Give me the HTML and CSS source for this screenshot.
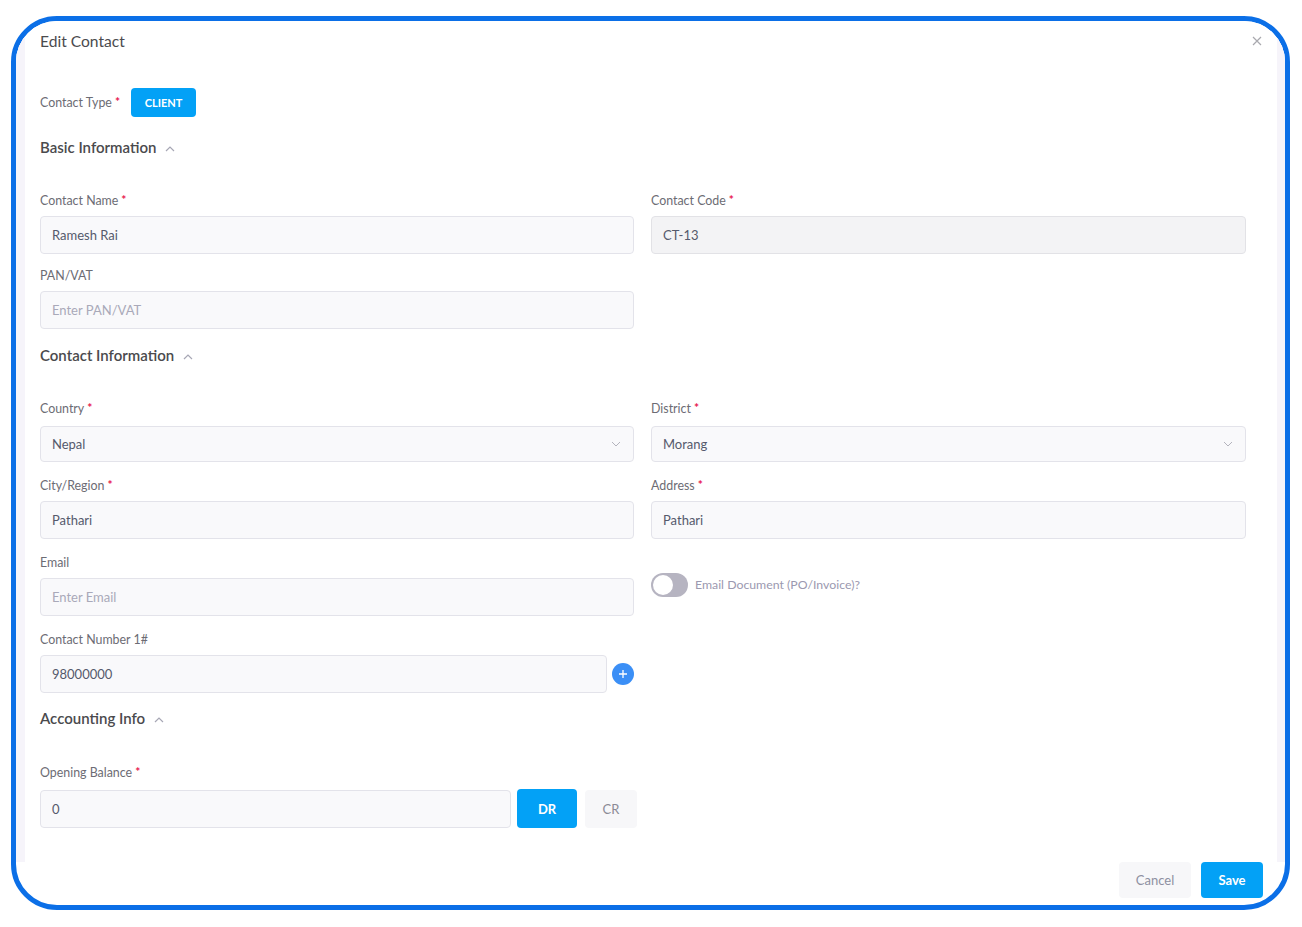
FILE: index.html
```html
<!DOCTYPE html>
<html lang="en">
<head>
<meta charset="utf-8">
<title>Edit Contact</title>
<link rel="stylesheet" href="styles.css">
</head>
<body>
<div class="frame">
  <div class="body">
    <div class="header">
      <h1 class="title">Edit Contact</h1>
      <span class="close" aria-label="Close">
        <svg width="10" height="10" viewBox="0 0 10 10"><path d="M1 1L9 9M9 1L1 9" stroke="#a9a9ae" stroke-width="1.2" fill="none"/></svg>
      </span>
    </div>

    <div class="type-row">
      <span class="label inline">Contact Type<span class="req">*</span></span>
      <span class="btn btn-client">CLIENT</span>
    </div>

    <h2 class="section-title sec-basic">Basic Information
      <svg class="chev" width="10" height="6" viewBox="0 0 10 6"><path d="M1 5L5 1L9 5" stroke="#a7a7b5" stroke-width="1.2" fill="none"/></svg>
    </h2>
    <div class="grid grid-basic">
      <div class="field">
        <div class="label">Contact Name<span class="req">*</span></div>
        <div class="input">Ramesh Rai</div>
      </div>
      <div class="field">
        <div class="label">Contact Code<span class="req">*</span></div>
        <div class="input disabled">CT-13</div>
      </div>
      <div class="field">
        <div class="label">PAN/VAT</div>
        <div class="input placeholder">Enter PAN/VAT</div>
      </div>
      <div></div>
    </div>

    <h2 class="section-title sec-contact">Contact Information
      <svg class="chev" width="10" height="6" viewBox="0 0 10 6"><path d="M1 5L5 1L9 5" stroke="#a7a7b5" stroke-width="1.2" fill="none"/></svg>
    </h2>
    <div class="grid grid-contact">
      <div class="field">
        <div class="label sel-label">Country<span class="req">*</span></div>
        <div class="input select">Nepal
          <svg width="10" height="6" viewBox="0 0 10 6"><path d="M1 1L5 5L9 1" stroke="#b4b4bd" stroke-width="1" fill="none"/></svg>
        </div>
      </div>
      <div class="field">
        <div class="label sel-label">District<span class="req">*</span></div>
        <div class="input select">Morang
          <svg width="10" height="6" viewBox="0 0 10 6"><path d="M1 1L5 5L9 1" stroke="#b4b4bd" stroke-width="1" fill="none"/></svg>
        </div>
      </div>
      <div class="field">
        <div class="label">City/Region<span class="req">*</span></div>
        <div class="input">Pathari</div>
      </div>
      <div class="field">
        <div class="label">Address<span class="req">*</span></div>
        <div class="input">Pathari</div>
      </div>
      <div class="field">
        <div class="label">Email</div>
        <div class="input placeholder email">Enter Email</div>
      </div>
      <div class="toggle-cell">
        <span class="toggle"><span class="knob"></span></span>
        <span class="toggle-label">Email Document (PO/Invoice)?</span>
      </div>
      <div class="field">
        <div class="label">Contact Number 1#</div>
        <div class="phone-row">
          <div class="input phone">98000000</div>
          <span class="plus">
            <svg width="10" height="10" viewBox="0 0 10 10"><path d="M5 1V9M1 5H9" stroke="#fff" stroke-width="1.3" fill="none"/></svg>
          </span>
        </div>
      </div>
      <div></div>
    </div>

    <h2 class="section-title sec-acc">Accounting Info
      <svg class="chev" width="10" height="6" viewBox="0 0 10 6"><path d="M1 5L5 1L9 5" stroke="#a7a7b5" stroke-width="1.2" fill="none"/></svg>
    </h2>
    <div class="field balance-field">
      <div class="label">Opening Balance<span class="req">*</span></div>
      <div class="balance-row">
        <div class="input balance">0</div>
        <span class="btn btn-dr">DR</span>
        <span class="btn btn-cr">CR</span>
      </div>
    </div>
  </div>
  <div class="footer">
    <span class="btn btn-cancel">Cancel</span>
    <span class="btn btn-save">Save</span>
  </div>
</div>
</body>
</html>
```

FILE: styles.css
```css
* { box-sizing: border-box; }
html, body { margin: 0; padding: 0; background: #ffffff; }
body {
  font-family: Lato, "Noto Sans", "Liberation Sans", sans-serif;
  color: #4a4a4a;
  width: 1302px;
  height: 927px;
  overflow: hidden;
}
.frame {
  margin: 16px 0 0 11px;
  width: 1279px;
  height: 894px;
  border: 5px solid #0b6fe7;
  border-radius: 46px;
  overflow: hidden;
  background: #ffffff;
  display: flex;
  flex-direction: column;
}
.body {
  height: 841px;
  flex: none;
  border-left: 9px solid #f6f4fa;
  border-right: 8px solid #f6f4fa;
  padding-left: 15px;
  padding-right: 15px;
  background: #ffffff;
}
.header {
  margin-top: 10px;
  height: 20px;
  display: flex;
  justify-content: space-between;
  align-items: center;
}
.title {
  margin: 0;
  font-size: 15.6px;
  line-height: 20px;
  font-weight: 400;
  color: #4b4b4e;
}
.close { display: flex; }
.type-row {
  margin-top: 37px;
  height: 29px;
  display: flex;
  align-items: center;
}
.label {
  font-size: 12.4px;
  line-height: 16px;
  height: 16px;
  color: #6c6c74;
  margin-top: 0;
  margin-bottom: 7px;
}
.label.inline { margin: 0 11px 0 0; }
.req {
  color: #e8164d;
  font-size: 12px;
  font-weight: 700;
  margin-left: 3px;
  position: relative;
  top: -1px;
}
.btn {
  display: inline-flex;
  align-items: center;
  justify-content: center;
  border-radius: 4px;
  font-size: 13px;
}
.btn-client {
  width: 65px;
  height: 29px;
  background: #03a1f6;
  color: #ffffff;
  font-size: 11px;
  font-weight: 700;
}
.section-title {
  margin: 0;
  font-size: 15px;
  line-height: 20px;
  font-weight: 600;
  color: #4a4a4d;
  display: flex;
  align-items: center;
}
.chev { margin-left: 9px; margin-top: 4px; }
.sec-basic { margin-top: 20px; }
.sec-contact { margin-top: 16px; }
.sec-acc { margin-top: 15px; }
.grid {
  display: grid;
  grid-template-columns: 594px 595px;
  column-gap: 17px;
  margin-top: 36px;
}
.grid-basic { row-gap: 14px; }
.grid-contact { row-gap: 16px; }
.input {
  height: 38px;
  border: 1px solid #e3e3ea;
  border-radius: 4px;
  background: #f9f9fb;
  padding: 0 11px;
  display: flex;
  align-items: center;
  font-size: 13px;
  color: #555a6c;
}
.input.disabled { background: #f3f3f5; border-color: #e2e2e6; }
.input.placeholder { color: #a9a9b9; }
.input.email { height: 38px; }
.sel-label { margin-bottom: 9px; }
.input.select {
  height: 36px;
  justify-content: space-between;
  padding-right: 12px;
}
.toggle-cell {
  padding-top: 18px;
  display: flex;
  align-items: flex-start;
}
.toggle {
  width: 37px;
  height: 24px;
  border-radius: 12px;
  background: #b6b4c1;
  padding: 2px;
  display: flex;
}
.knob {
  width: 20px;
  height: 20px;
  border-radius: 50%;
  background: #ffffff;
}
.toggle-label {
  margin-left: 7px;
  font-size: 12.3px;
  line-height: 24px;
  color: #9b99b0;
}
.phone-row { display: flex; align-items: center; }
.input.phone { width: 568px; }
.plus {
  margin-left: 5px;
  width: 22px;
  height: 22px;
  border-radius: 50%;
  background: #3b8ff6;
  display: flex;
  align-items: center;
  justify-content: center;
}
.balance-field { margin-top: 37px; }
.balance-field .label { margin-bottom: 8px; }
.balance-row { display: flex; align-items: center; }
.input.balance { width: 471px; }
.btn-dr {
  margin-left: 6px;
  width: 60px;
  height: 39px;
  background: #03a1f6;
  color: #ffffff;
  font-weight: 700;
}
.btn-cr {
  margin-left: 8px;
  width: 52px;
  height: 38px;
  background: #f7f7f9;
  color: #8b8b96;
}
.footer {
  flex: 1;
  display: flex;
  justify-content: flex-end;
  align-items: flex-start;
  gap: 10px;
  padding-right: 22px;
}
.btn-cancel {
  width: 72px;
  height: 36px;
  background: #f7f7f9;
  color: #8e90a1;
}
.btn-save {
  width: 62px;
  height: 36px;
  background: #03a1f6;
  color: #ffffff;
  font-weight: 700;
}
```
